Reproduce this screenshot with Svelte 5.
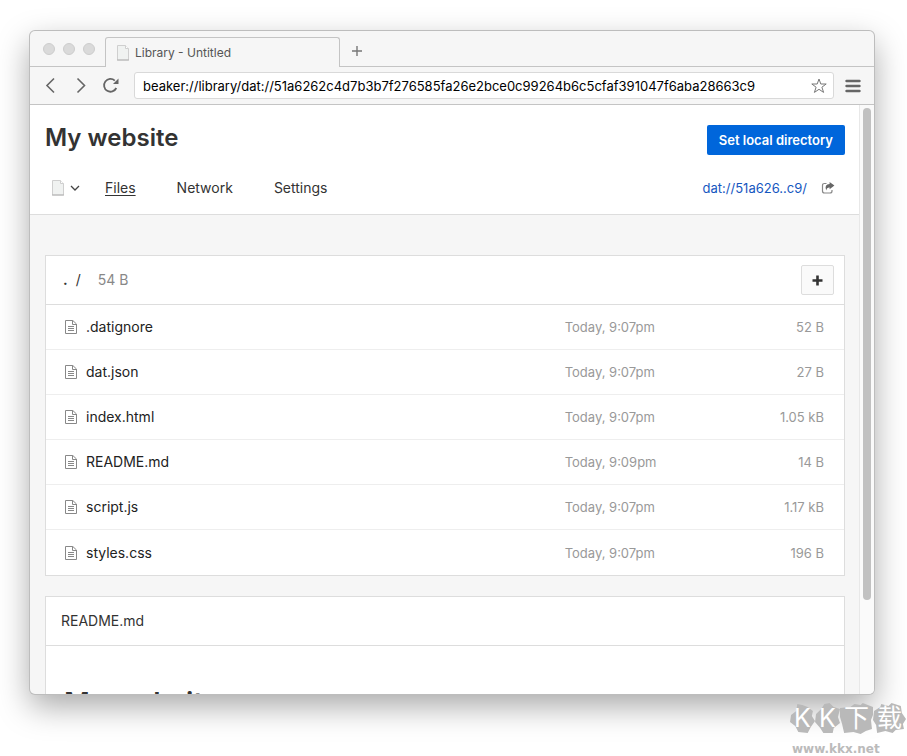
<script lang="ts">
    type FileEntry = { name: string; modified: string; size: string };

    let url = "beaker://library/dat://51a6262c4d7b3b7f276585fa26e2bce0c99264b6c5cfaf391047f6aba28663c9";
    let activeTab = "Files";
    const tabs = ["Files", "Network", "Settings"];

    const files: FileEntry[] = [
        { name: ".datignore", modified: "Today, 9:07pm", size: "52 B" },
        { name: "dat.json", modified: "Today, 9:07pm", size: "27 B" },
        { name: "index.html", modified: "Today, 9:07pm", size: "1.05 kB" },
        { name: "README.md", modified: "Today, 9:09pm", size: "14 B" },
        { name: "script.js", modified: "Today, 9:07pm", size: "1.17 kB" },
        { name: "styles.css", modified: "Today, 9:07pm", size: "196 B" },
    ];

    // blob outlines behind the watermark characters
    const stamps = [
        { char: "K", path: "M1 12 L6 8 L7 1 L12 2 L17 4 L22 8 L21 13 L24 18 L20 24 L17 30 L8 29 L5 23 L0 19 Z" },
        { char: "K", path: "M1 11 L6 6 L9 1 L14 0 L18 4 L24 6 L22 14 L24 20 L18 25 L17 30 L8 30 L5 25 L0 19 Z" },
        { char: "下", path: "M0 5 L10 4 L14 1 L20 2 L22 0 L32 4 L32 12 L30 17 L31 26 L25 28 L20 31 L13 29 L4 30 L2 21 L0 14 Z" },
        { char: "载", path: "M1 8 L7 4 L8 1 L15 3 L18 0 L27 3 L28 10 L32 16 L29 21 L30 26 L22 27 L19 30 L12 28 L4 30 L3 22 L0 17 Z" },
    ];
</script>

{#snippet favicon()}
    <svg class="favicon" viewBox="0 0 14 16" width="14" height="16" aria-hidden="true">
        <path d="M1.5 .5 H9.5 L12.5 3.5 V15 H1.5 Z" fill="#f0f2f1" stroke="#cfcfcf" />
        <path d="M9.5 .5 V3.5 H12.5" fill="#fff" stroke="#cfcfcf" />
        <path d="M1 15 H13" stroke="#b2b2b2" />
    </svg>
{/snippet}

<div class="desktop">
    <div class="window">
        <div class="tabStrip">
            <div class="lights"><i></i><i></i><i></i></div>
            <div class="tab">
                {@render favicon()}
                <span>Library - Untitled</span>
            </div>
            <button class="iconButton newTab" aria-label="New tab">
                <svg viewBox="0 0 12 12" width="12" height="12"><path d="M6 1 V11 M1 6 H11" stroke="#777" stroke-width="1.4" /></svg>
            </button>
        </div>

        <div class="toolbar">
            <button class="iconButton" aria-label="Back">
                <svg viewBox="0 0 16 18" width="16" height="18"><path d="M12 1.5 L5 8.5 L12 15.5" /></svg>
            </button>
            <button class="iconButton" aria-label="Forward">
                <svg viewBox="0 0 16 18" width="16" height="18"><path d="M5.5 1.5 L12.5 8.5 L5.5 15.5" /></svg>
            </button>
            <button class="iconButton reload" aria-label="Reload">
                <svg viewBox="0 0 18 18" width="18" height="18">
                    <path d="M14.3 11 A6.4 6.4 0 1 1 12.8 3.6" stroke-width="1.8" />
                    <path d="M16.5 1.5 V7 H11 Z" fill="#666" stroke="none" />
                </svg>
            </button>
            <div class="location">
                <input type="text" aria-label="Address" spellcheck="false" bind:value={url} />
                <button class="iconButton star" aria-label="Bookmark">
                    <svg viewBox="0 0 16 16" width="16" height="16">
                        <path d="M8 1 L9.8 6 L15.2 6 L10.9 9.2 L12.6 14.4 L8 11.3 L3.4 14.4 L5.1 9.2 L.8 6 L6.2 6 Z" />
                    </svg>
                </button>
            </div>
            <button class="iconButton menu" aria-label="Menu">
                <svg viewBox="0 0 16 14" width="16" height="14">
                    <path d="M1.5 2 H14.5 M1.5 7 H14.5 M1.5 12 H14.5" stroke-width="2.4" stroke-linecap="round" />
                </svg>
            </button>
        </div>

        <div class="viewport">
            <div class="page">
                <header>
                    <div class="titleRow">
                        <h1>My website</h1>
                        <button class="primary">Set local directory</button>
                    </div>
                    <div class="navRow">
                        <button class="iconButton typePicker" aria-label="Site type">
                            {@render favicon()}
                            <svg viewBox="0 0 10 6" width="10" height="6"><path d="M1 1 L5 5 L9 1" stroke="#444" stroke-width="1.3" fill="none" /></svg>
                        </button>
                        <nav>
                            {#each tabs as tab}
                                <a href="#{tab}" class:active={tab === activeTab} on:click|preventDefault={() => (activeTab = tab)}>{tab}</a>
                            {/each}
                        </nav>
                        <a class="datLink" href="#dat">dat://51a626..c9/</a>
                        <button class="iconButton share" aria-label="Share">
                            <svg viewBox="0 0 14 14" width="14" height="14">
                                <path d="M5.5 2.5 H3.5 Q1.5 2.5 1.5 4.5 V10 Q1.5 12 3.5 12 H9 Q11 12 11 10 V9" fill="none" stroke="#888" stroke-width="1.2" />
                                <path d="M8.6 1 L13.4 4.6 L8.6 8.3 V6.4 Q5.8 6.2 5.2 9.4 Q3 3.2 8.6 2.9 Z" fill="#666" />
                            </svg>
                        </button>
                    </div>
                </header>

                <main>
                    <section class="card">
                        <div class="cardHeader pathBar">
                            <b>.</b>
                            <span>/</span>
                            <span class="total">54 B</span>
                            <button class="add" aria-label="Add files">
                                <svg viewBox="0 0 11 11" width="11" height="11"><path d="M5.5 .5 V10.5 M.5 5.5 H10.5" stroke="#333" stroke-width="2.6" /></svg>
                            </button>
                        </div>
                        <table>
                            <tbody>
                                {#each files as file}
                                    <tr>
                                        <td class="name">
                                            <a href="#{file.name}">
                                                <svg viewBox="0 0 14 14" width="14" height="14" aria-hidden="true">
                                                    <path d="M1.5 .5 H8.8 L12.5 4 V13.5 H1.5 Z M8.5 .5 V4.5 H12.5" />
                                                    <path d="M4 6.5 H10 M4 8.5 H10 M4 10.5 H10" />
                                                </svg>
                                                {file.name}
                                            </a>
                                        </td>
                                        <td class="modified">{file.modified}</td>
                                        <td class="size">{file.size}</td>
                                    </tr>
                                {/each}
                            </tbody>
                        </table>
                    </section>

                    <section class="card">
                        <div class="cardHeader">README.md</div>
                        <div class="readme">
                            <h2>My website</h2>
                        </div>
                    </section>
                </main>
            </div>
            <div class="scrollTrack"><div class="scrollThumb"></div></div>
        </div>
    </div>

    <div class="watermark">
        <div class="stamps">
            {#each stamps as stamp, i}
                <span class="stamp" class:wide={i > 1}>
                    <svg viewBox="0 0 {i > 1 ? 32 : 24} 31" preserveAspectRatio="none" aria-hidden="true"><path d={stamp.path} fill="#b9b9b9" /></svg>
                    <span>{stamp.char}</span>
                </span>
            {/each}
        </div>
        <div class="site">www.kkx.net</div>
    </div>
</div>

<style>
    :global(body){
        background: #fff;
    }

    *{
        box-sizing: border-box;
    }

    .desktop{
        display: flex;
        flex-direction: column;
        height: 100vh;
        overflow: hidden;
        color: #333;
        font-family: Inter, "Liberation Sans", sans-serif;
        font-size: 14px;
        line-height: 20px;
    }

    .window{
        flex: 1;
        min-height: 0;
        display: flex;
        flex-direction: column;
        margin: 31px 33px 0 30px;
        overflow: hidden;
        border-radius: 5px;
        background: #f6f6f6;
        box-shadow: 0 0 0 1px #bdbdbd, 0 12px 32px rgba(0, 0, 0, 0.35);
    }

    button, input{
        font: inherit;
        color: inherit;
    }

    a{
        color: inherit;
        text-decoration: none;
    }

    svg{
        display: block;
    }

    .iconButton{
        display: flex;
        align-items: center;
        padding: 0;
        border: none;
        background: none;
    }

    /* tabs */
    .tabStrip{
        display: flex;
        flex: none;
        height: 36px;
        box-shadow: inset 0 -1px #c4c4c4;
    }

    .lights{
        display: flex;
        gap: 8px;
        padding: 12px 10px 0 13px;
    }

    .lights i{
        width: 12px;
        height: 12px;
        border: 1px solid #cdcdcd;
        border-radius: 50%;
        background: #dadada;
    }

    .tab{
        display: flex;
        align-items: center;
        gap: 5px;
        width: 235px;
        margin-top: 6px;
        padding: 0 10px;
        border: 1px solid #c4c4c4;
        border-bottom: none;
        border-radius: 3px 3px 0 0;
        background: #f6f6f6;
        color: #555;
        font-size: 12px;
    }

    .newTab{
        margin: 4px 0 0 11px;
    }

    /* toolbar */
    .toolbar{
        display: flex;
        flex: none;
        align-items: center;
        gap: 14px;
        height: 38px;
        padding: 0 13px 0 12px;
        border-bottom: 1px solid #c4c4c4;
    }

    .toolbar svg{
        fill: none;
        stroke: #666;
        stroke-width: 1.6;
    }

    .location{
        display: flex;
        flex: 1;
        min-width: 0;
        align-items: center;
        height: 27px;
        padding: 0 6px 0 8px;
        border: 1px solid #d9d9d9;
        border-radius: 3px;
        background: #fff;
    }

    .location input{
        flex: 1;
        min-width: 0;
        height: 24px;
        padding: 0;
        border: none;
        outline: none;
        background: none;
        color: #000;
        font-size: 13px;
    }

    .toolbar .star svg{
        stroke: #777;
        stroke-width: 1;
    }

    .menu{
        margin-left: -3px;
    }

    /* page */
    .viewport{
        display: flex;
        flex: 1;
        min-height: 0;
    }

    .page{
        flex: 1;
        min-width: 0;
        overflow: hidden;
    }

    .scrollTrack{
        width: 15px;
        padding: 3px 3px 0;
        border-left: 1px solid #e8e8e8;
        background: #fafafa;
    }

    .scrollThumb{
        width: 8px;
        height: 84%;
        border-radius: 4px;
        background: #c1c1c1;
    }

    header{
        padding: 16px 14px 14px 15px;
        border-bottom: 1px solid #ddd;
        background: #fff;
    }

    .titleRow, .navRow{
        display: flex;
        align-items: center;
    }

    .titleRow{
        justify-content: space-between;
        height: 38px;
    }

    h1, h2{
        margin: 0;
        font-weight: 600;
        line-height: 34px;
    }

    h1{
        padding-bottom: 4px;
        font-size: 24px;
    }

    h2{
        font-size: 28px;
    }

    .primary{
        height: 30px;
        padding: 0 12px;
        border: none;
        border-radius: 2px;
        background: #0066db;
        color: #fff;
        font-size: 13px;
        font-weight: 600;
    }

    .navRow{
        height: 24px;
        margin-top: 17px;
        padding: 0 10px 0 6px;
    }

    .typePicker{
        gap: 5px;
    }

    nav{
        display: flex;
        flex: 1;
        gap: 41px;
        margin-left: 25px;
    }

    nav a.active{
        text-decoration: underline;
        text-underline-offset: 2px;
    }

    .datLink{
        margin-right: 14px;
        color: #1557bf;
        font-size: 13px;
    }

    main{
        display: flex;
        flex-direction: column;
        gap: 20px;
        padding: 40px 14px 0 15px;
    }

    .card{
        border: 1px solid #ddd;
        background: #fff;
    }

    .cardHeader{
        display: flex;
        align-items: center;
        height: 49px;
        padding: 0 10px 0 15px;
        border-bottom: 1px solid #ddd;
    }

    .pathBar{
        gap: 8px;
        padding-left: 17px;
    }

    .total{
        margin-left: 9px;
        color: #888;
    }

    .add{
        display: flex;
        align-items: center;
        justify-content: center;
        width: 33px;
        height: 30px;
        margin-left: auto;
        padding: 0;
        border: 1px solid #ddd;
        border-radius: 2px;
        background: #fafafa;
    }

    table{
        width: 100%;
        border-collapse: separate;
        border-spacing: 0;
        table-layout: fixed;
    }

    td{
        height: 45px;
        padding: 0;
        border-bottom: 1px solid #eee;
    }

    tr:last-child td{
        border-bottom: none;
    }

    .name{
        width: 65%;
        padding-left: 18px;
        color: #222;
    }

    .name a{
        display: flex;
        align-items: center;
        gap: 8px;
    }

    .name svg{
        fill: none;
        stroke: #888;
    }

    .modified, .size{
        color: #999;
        font-size: 13px;
    }

    .size{
        padding-right: 20px;
        text-align: right;
    }

    .readme{
        padding: 40px 18px;
    }

    /* watermark */
    .watermark{
        flex: none;
        align-self: flex-end;
        height: 62px;
        padding: 9px 1px 0 0;
        color: #bbb;
    }

    .stamps{
        display: flex;
        position: relative;
    }

    .stamp{
        display: grid;
        width: 25px;
        height: 31px;
        place-items: center;
        color: #fff;
        font-family: Inter, "Noto Sans CJK SC", sans-serif;
        font-size: 25px;
        line-height: 31px;
    }

    .stamp.wide{
        width: 33px;
    }

    .stamp > *{
        grid-area: 1 / 1;
    }

    .stamp svg{
        width: 100%;
        height: 100%;
    }

    .site{
        margin-top: 7px;
        padding-left: 2px;
        font-family: "DejaVu Sans", sans-serif;
        font-size: 12px;
        font-weight: bold;
        line-height: 16px;
    }
</style>
